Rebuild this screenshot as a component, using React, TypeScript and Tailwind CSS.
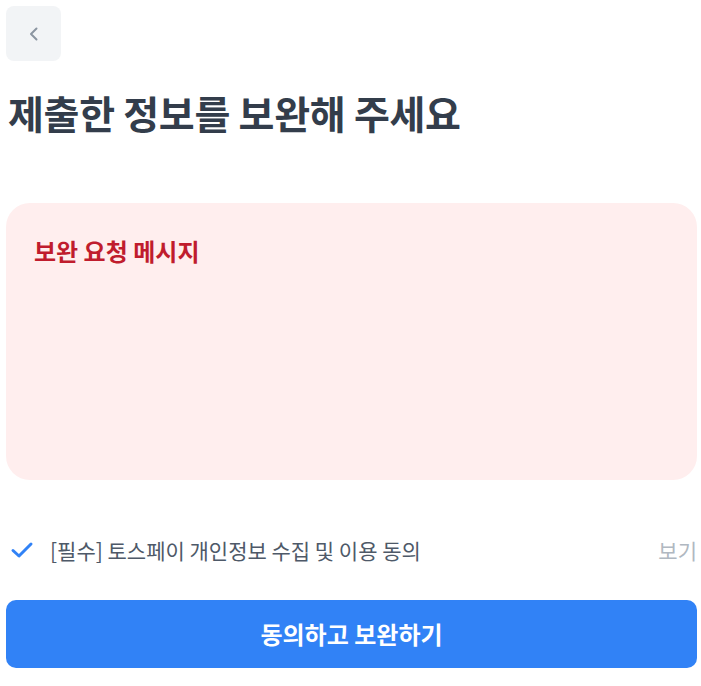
export default function App() {
  return (
    <div
      className="min-h-screen bg-white pl-[6px] pr-[4px] pt-[6px]"
      style={{ fontFamily: '"Noto Sans CJK KR", "Noto Sans", sans-serif' }}
    >
      <button
        type="button"
        className="grid h-[55px] w-[55px] place-items-center rounded-lg bg-[#f2f4f6]"
      >
        <svg width="12" height="16" viewBox="0 0 12 16" fill="none">
          <path d="M8.5 2.5L3 8L8.5 13.5" stroke="#8b95a1" strokeWidth="2" strokeLinecap="round" strokeLinejoin="round" />
        </svg>
      </button>

      <h1 className="mt-[24px] pl-[2px] text-[39px] font-bold leading-[54px] tracking-[-0.3px] text-[#333d4b]">
        제출한 정보를 보완해 주세요
      </h1>

      <div className="mt-[64px] h-[277px] rounded-[24px] bg-[#ffeeee] px-[28px] pt-[30px]">
        <p className="text-[24px] font-bold leading-[36px] text-[#c01c2d]">
          보완 요청 메시지
        </p>
      </div>

      <div className="mt-[55px] flex items-center justify-between">
        <div className="flex items-center">
          <svg width="28" height="28" viewBox="0 0 28 28" fill="none" className="ml-[2px]">
            <path d="M5 14.5L11 20L23 8" stroke="#3182f6" strokeWidth="3" strokeLinecap="round" strokeLinejoin="round" />
          </svg>
          <span className="ml-[14px] text-[21px] leading-[30px] text-[#4e5968]">
            [필수] 토스페이 개인정보 수집 및 이용 동의
          </span>
        </div>
        <span className="text-[21px] leading-[30px] text-[#b0b8c1]">보기</span>
      </div>

      <button
        type="button"
        className="mt-[35px] flex h-[68px] w-full items-center justify-center rounded-[10px] bg-[#3182f6] text-[24px] font-bold text-white"
      >
        동의하고 보완하기
      </button>
    </div>
  );
}
